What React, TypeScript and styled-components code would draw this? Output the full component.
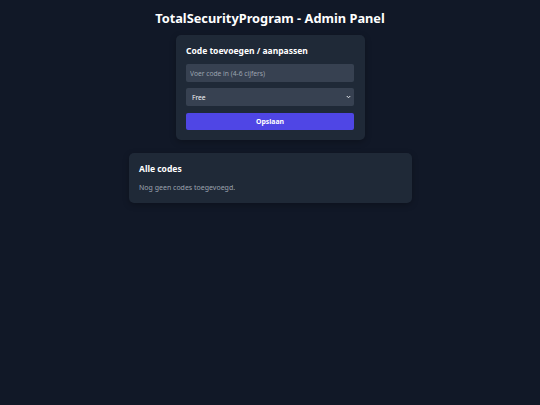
import React from 'react'
import styled, { createGlobalStyle } from 'styled-components'

const GlobalStyle = createGlobalStyle`
  html, body {
    margin: 0;
    padding: 0;
    background: #111827;
    min-height: 100%;
  }

  body {
    font-family: 'Noto Sans', 'Open Sans', sans-serif;
    color: #f3f4f6;
  }

  * {
    box-sizing: border-box;
  }
`

const Page = styled.div`
  min-height: 405px;
  padding: 9px 0 20px;
  display: flex;
  flex-direction: column;
  align-items: center;
`

const Title = styled.h1`
  margin: 0 0 8px;
  font-size: 12.8px;
  line-height: 18px;
  font-weight: 700;
  color: #ffffff;
`

const Card = styled.section<{ $width: number }>`
  width: ${(p) => p.$width}px;
  background: #1f2937;
  border-radius: 5px;
  padding: 10px 10.5px;
  box-shadow: 0 2px 6px rgba(0, 0, 0, 0.25);
`

const CardTitle = styled.h2`
  margin: 0;
  font-size: 8.5px;
  line-height: 12px;
  font-weight: 700;
  color: #ffffff;
`

const Form = styled.form`
  margin-top: 7px;
  display: flex;
  flex-direction: column;
  gap: 6px;
`

const Input = styled.input`
  display: block;
  width: 100%;
  height: 18px;
  padding: 0 4px;
  border: none;
  border-radius: 2px;
  background: #374151;
  color: #f3f4f6;
  font-family: inherit;
  font-size: 6.7px;
  outline: none;

  &::placeholder {
    color: #9ca3af;
  }
`

const SelectWrap = styled.div`
  position: relative;
  display: flex;
`

const Select = styled.select`
  display: block;
  width: 100%;
  height: 18px;
  padding: 0 14px 0 6px;
  border: none;
  border-radius: 2px;
  background: #374151;
  color: #f3f4f6;
  font-family: inherit;
  font-size: 6.7px;
  appearance: none;
  outline: none;
`

const Chevron = styled.svg`
  position: absolute;
  right: 3px;
  top: 7px;
  width: 5px;
  height: 4px;
  pointer-events: none;
`

const SaveButton = styled.button`
  margin-top: 1px;
  height: 17px;
  border: none;
  border-radius: 2px;
  background: #4f46e5;
  color: #ffffff;
  font-family: inherit;
  font-size: 6.9px;
  font-weight: 700;
  cursor: pointer;
`

const CardsGap = styled.div`
  height: 13px;
`

const EmptyText = styled.p`
  margin: 7px 0 0;
  font-size: 7px;
  line-height: 11px;
  color: #9ca3af;
`

export default function App() {
  return (
    <>
      <GlobalStyle />
      <Page>
        <Title>TotalSecurityProgram - Admin Panel</Title>

        <Card $width={189}>
          <CardTitle>Code toevoegen / aanpassen</CardTitle>
          <Form onSubmit={(e) => e.preventDefault()}>
            <Input type="text" placeholder="Voer code in (4-6 cijfers)" />
            <SelectWrap>
              <Select defaultValue="free">
                <option value="free">Free</option>
                <option value="premium">Premium</option>
              </Select>
              <Chevron viewBox="0 0 10 8">
                <path d="M1.5 2 L5 5.5 L8.5 2" fill="none" stroke="#e5e7eb" strokeWidth="2" />
              </Chevron>
            </SelectWrap>
            <SaveButton type="submit">Opslaan</SaveButton>
          </Form>
        </Card>

        <CardsGap />

        <Card $width={283}>
          <CardTitle>Alle codes</CardTitle>
          <EmptyText>Nog geen codes toegevoegd.</EmptyText>
        </Card>
      </Page>
    </>
  )
}
